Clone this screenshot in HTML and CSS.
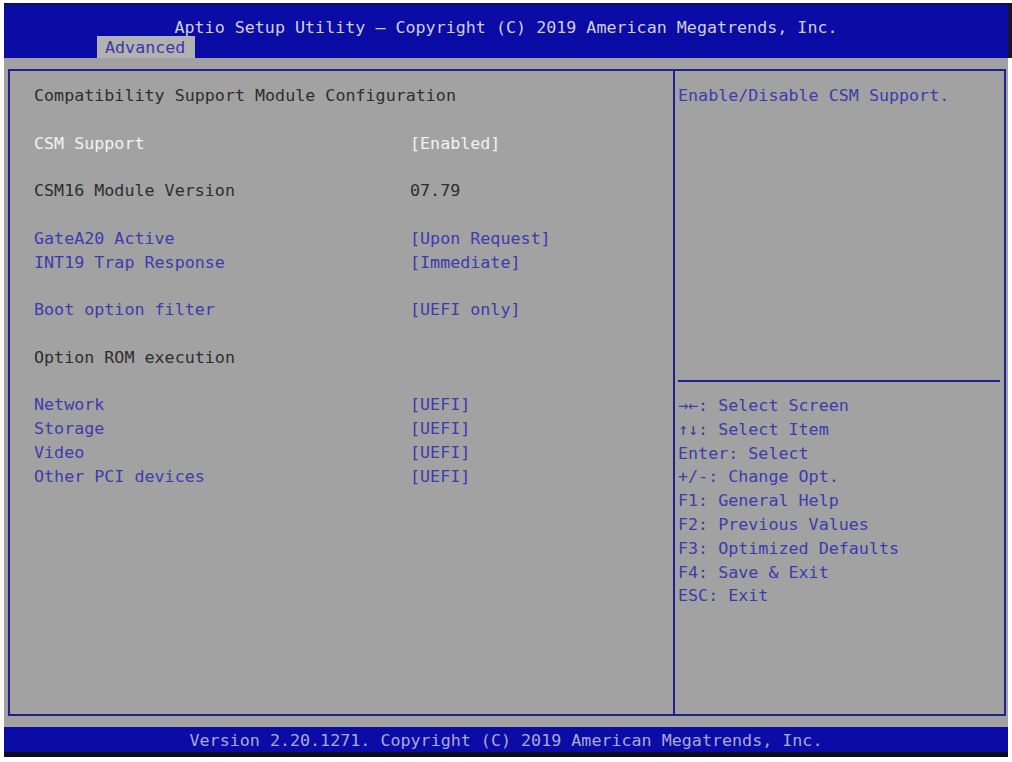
FILE: index.html
```html
<!DOCTYPE html>
<html>
<head>
<meta charset="utf-8">
<link rel="stylesheet" href="styles.css">
</head>
<body>
<div class="screen">
  <div class="header">
    <div class="title">Aptio Setup Utility – Copyright (C) 2019 American Megatrends, Inc.</div>
    <div class="tabs"><div class="tab">Advanced</div></div>
  </div>
  <div class="body">
    <div class="box">
      <div class="main">
        <div class="row dark"><span class="label">Compatibility Support Module Configuration</span></div>
        <div class="row"></div>
        <div class="row selected"><span class="label">CSM Support</span><span class="value">[Enabled]</span></div>
        <div class="row"></div>
        <div class="row dark"><span class="label">CSM16 Module Version</span><span class="value">07.79</span></div>
        <div class="row"></div>
        <div class="row"><span class="label">GateA20 Active</span><span class="value">[Upon Request]</span></div>
        <div class="row"><span class="label">INT19 Trap Response</span><span class="value">[Immediate]</span></div>
        <div class="row"></div>
        <div class="row"><span class="label">Boot option filter</span><span class="value">[UEFI only]</span></div>
        <div class="row"></div>
        <div class="row dark"><span class="label">Option ROM execution</span></div>
        <div class="row"></div>
        <div class="row"><span class="label">Network</span><span class="value">[UEFI]</span></div>
        <div class="row"><span class="label">Storage</span><span class="value">[UEFI]</span></div>
        <div class="row"><span class="label">Video</span><span class="value">[UEFI]</span></div>
        <div class="row"><span class="label">Other PCI devices</span><span class="value">[UEFI]</span></div>
      </div>
      <div class="side">
        <div class="desc">Enable/Disable CSM Support.</div>
        <div class="keys">
          <div class="row">→←: Select Screen</div>
          <div class="row">↑↓: Select Item</div>
          <div class="row">Enter: Select</div>
          <div class="row">+/-: Change Opt.</div>
          <div class="row">F1: General Help</div>
          <div class="row">F2: Previous Values</div>
          <div class="row">F3: Optimized Defaults</div>
          <div class="row">F4: Save &amp; Exit</div>
          <div class="row">ESC: Exit</div>
        </div>
      </div>
    </div>
  </div>
  <div class="footer">Version 2.20.1271. Copyright (C) 2019 American Megatrends, Inc.</div>
</div>
</body>
</html>
```

FILE: styles.css
```css
html, body {
  margin: 0;
  padding: 0;
  background: #ffffff;
}
.screen {
  width: 1004px;
  margin: 3px 0 0 4px;
  font-family: "DejaVu Sans Mono", "Liberation Mono", monospace;
  font-size: 16.7px;
}
.header {
  background: #0b0ba6;
  border-top: 2px solid #14143c;
  box-shadow: 4px 0 0 #15152a;
}
.title {
  padding-top: 13px;
  line-height: 18px;
  height: 18px;
  text-align: center;
  color: #cfcfdc;
  white-space: pre;
}
.tabs {
  display: flex;
  padding-left: 93px;
}
.tab {
  background: #b2b2b2;
  color: #3a3aa6;
  height: 22px;
  line-height: 22px;
  padding: 0 10px 0 8px;
}
.body {
  background: #a2a2a2;
  padding: 11px 2px 11px 4px;
}
.box {
  display: flex;
  height: 643px;
  border: 2px solid #22228e;
}
.main {
  width: 639px;
  padding: 13px 0 0 24px;
  border-right: 2px solid #22228e;
  color: #3c3cac;
}
.row {
  height: 23.8px;
  line-height: 23.8px;
  display: flex;
  white-space: pre;
}
.label {
  width: 376px;
  flex: none;
}
.dark {
  color: #2e2e2e;
}
.selected {
  color: #f2f2f2;
}
.side {
  flex: 1;
  display: flex;
  flex-direction: column;
  color: #3c3cac;
}
.desc {
  height: 296px;
  padding-top: 13px;
  margin: 0 4px 0 3px;
  line-height: 23.8px;
  border-bottom: 2px solid #22228e;
  white-space: pre;
}
.keys {
  padding: 12px 0 0 3px;
}
.footer {
  background: #0b0ba6;
  color: #a9a9d6;
  height: 23px;
  line-height: 23px;
  padding-top: 2px;
  text-align: center;
  border-bottom: 5px solid #0c0c1c;
  white-space: pre;
}
```
